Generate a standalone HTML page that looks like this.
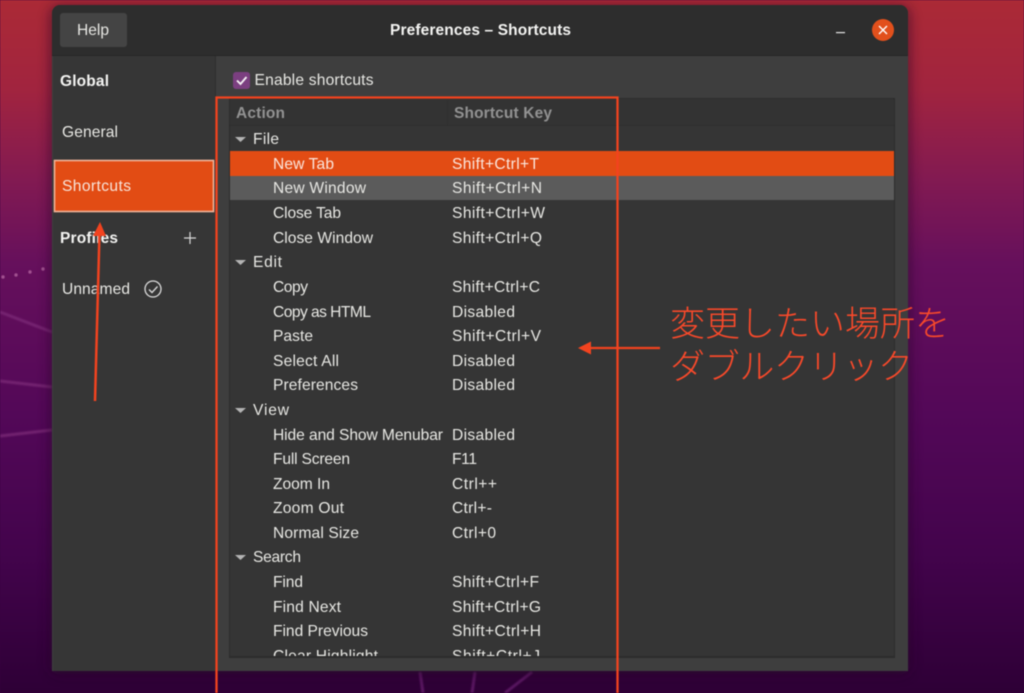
<!DOCTYPE html>
<html><head><meta charset="utf-8"><style>
html,body{margin:0;padding:0;width:1024px;height:693px;overflow:hidden;background:#3a0040}
svg{display:block;filter:blur(.4px)}
text{font-family:"Liberation Sans","Noto Sans CJK JP",sans-serif;font-size:15.6px;fill:#e8e8e4}
.b{font-weight:bold;fill:#f4f4f2;font-size:15.5px}
.h{font-weight:bold;fill:#929292;font-size:15.5px}
.j{font-family:"Liberation Sans","Noto Sans CJK JP",sans-serif;font-size:35px;font-weight:300;fill:#f8492a}
</style></head><body>
<svg width="1024" height="693" viewBox="0 0 1024 693" xmlns="http://www.w3.org/2000/svg">
<defs>
<linearGradient id="bg" x1="0" y1="0" x2="0" y2="1">
<stop offset="0" stop-color="#ab2a36"/><stop offset=".13" stop-color="#a1243f"/><stop offset=".26" stop-color="#821a52"/><stop offset=".38" stop-color="#66105c"/><stop offset=".6" stop-color="#530858"/><stop offset=".8" stop-color="#43044c"/><stop offset="1" stop-color="#2e0036"/>
</linearGradient>
<filter id="s" x="-5%" y="-5%" width="110%" height="110%"><feGaussianBlur stdDeviation="6"/></filter>
<filter id="l" x="-20%" y="-200%" width="140%" height="500%"><feGaussianBlur stdDeviation=".8"/></filter>
<clipPath id="tree"><rect x="230" y="99" width="664" height="557"/></clipPath>
</defs>
<rect width="1024" height="693" fill="url(#bg)"/>
<g stroke="#7d2a78" stroke-width="3" fill="none" opacity=".75" filter="url(#l)">
<path d="M0 312L52 332"/><path d="M0 381L52 387"/><path d="M0 436L52 430"/>
</g>
<g stroke="#5a1262" stroke-width="3" fill="none" filter="url(#l)"><path d="M420 672L423 693"/><path d="M475 672L472 693"/><path d="M532 672L505 693"/></g>
<g fill="#a0508f"><circle cx="3" cy="277" r="1.7"/><circle cx="16" cy="275" r="1.7"/><circle cx="30" cy="272" r="1.7"/><circle cx="43" cy="269" r="1.7"/></g>

<rect x="50" y="6" width="860" height="668" rx="8" fill="#200a20" opacity=".55" filter="url(#s)"/>
<path d="M52 671V13a8 8 0 0 1 8-8H900a8 8 0 0 1 8 8V671Z" fill="#3e3e3e"/>
<path d="M52 55V13a8 8 0 0 1 8-8H900a8 8 0 0 1 8 8V55Z" fill="#2d2d2d"/>
<rect x="52" y="55" width="856" height="1" fill="#262626"/>
<rect x="53" y="56" width="162" height="615" fill="#363636"/>
<rect x="215" y="56" width="1" height="615" fill="#2e2e2e"/>

<rect x="60" y="13" width="67" height="34" rx="3" fill="#444"/>
<text x="77" y="35" textLength="32" lengthAdjust="spacing">Help</text>
<text class="b" x="390" y="35" textLength="181" lengthAdjust="spacing">Preferences – Shortcuts</text>
<rect x="836" y="32" width="9" height="1.2" fill="#e6e6e6"/>
<circle cx="883" cy="30" r="11" fill="#e2501c"/>
<path d="M879 26L887 34M887 26L879 34" stroke="#fff" stroke-width="1.4"/>

<text class="b" x="60" y="86" textLength="49" lengthAdjust="spacing">Global</text>
<text x="62" y="137" textLength="56" lengthAdjust="spacing">General</text>
<rect x="54.5" y="160.5" width="159" height="51" fill="#e24c14" stroke="#f2b49a" stroke-width="1.6"/>
<text x="62" y="191" textLength="69" lengthAdjust="spacing" style="fill:#f8e4da">Shortcuts</text>
<text class="b" x="60" y="243" textLength="58" lengthAdjust="spacing">Profiles</text>
<path d="M190 232V244M184 238H196" stroke="#d8d8d8" stroke-width="1.2"/>
<text x="62" y="294" textLength="68" lengthAdjust="spacing">Unnamed</text>
<circle cx="153" cy="289" r="8" fill="none" stroke="#dcdcdc" stroke-width="1.3"/>
<path d="M149 289.5L152 292.5L157.5 286.5" fill="none" stroke="#dcdcdc" stroke-width="1.3"/>

<rect x="233" y="72" width="17" height="17" rx="3" fill="#7b3f80"/>
<path d="M237 80.5L240.5 84L246.5 77" fill="none" stroke="#f4f0f4" stroke-width="1.9"/>
<text x="254.500" y="85" textLength="119" lengthAdjust="spacing">Enable shortcuts</text>

<rect x="229" y="98" width="666" height="560" fill="#2c2c2c"/>
<rect x="230" y="99" width="664" height="557" fill="#353535"/>
<rect x="230" y="99" width="664" height="26" fill="#333"/>
<rect x="230" y="125" width="664" height="1" fill="#2f2f2f"/>
<rect x="447" y="100" width="1" height="25" fill="#2f2f2f"/>
<text class="h" x="236" y="118" textLength="49" lengthAdjust="spacing">Action</text>
<text class="h" x="454" y="118" textLength="98" lengthAdjust="spacing">Shortcut Key</text>

<rect x="230" y="151" width="664" height="25" fill="#e24c14"/>
<rect x="230" y="176" width="664" height="24" fill="#5b5b5b"/>

<g fill="#b4b4b4">
<path d="M235 137H246L240.500 142Z"/><path d="M235 260H246L240.500 265Z"/><path d="M235 408H246L240.500 413Z"/><path d="M235 555H246L240.500 560Z"/>
</g>
<g clip-path="url(#tree)">
<text x="253" y="144" textLength="26" lengthAdjust="spacing">File</text>
<text x="273" y="169" textLength="61" lengthAdjust="spacing" style="fill:#fbe6dc">New Tab</text><text x="452" y="169" textLength="87" lengthAdjust="spacing" style="fill:#fbe6dc">Shift+Ctrl+T</text>
<text x="273" y="193" textLength="93" lengthAdjust="spacing">New Window</text><text x="452" y="193" textLength="90" lengthAdjust="spacing">Shift+Ctrl+N</text>
<text x="273" y="218" textLength="68" lengthAdjust="spacing">Close Tab</text><text x="452" y="218" textLength="93" lengthAdjust="spacing">Shift+Ctrl+W</text>
<text x="273" y="243" textLength="100" lengthAdjust="spacing">Close Window</text><text x="452" y="243" textLength="90" lengthAdjust="spacing">Shift+Ctrl+Q</text>
<text x="253" y="267" textLength="29" lengthAdjust="spacing">Edit</text>
<text x="273" y="292" textLength="35" lengthAdjust="spacing">Copy</text><text x="452" y="292" textLength="88" lengthAdjust="spacing">Shift+Ctrl+C</text>
<text x="273" y="317" textLength="98" lengthAdjust="spacing">Copy as HTML</text><text x="452" y="317" textLength="63" lengthAdjust="spacing">Disabled</text>
<text x="273" y="341" textLength="40" lengthAdjust="spacing">Paste</text><text x="452" y="341" textLength="89" lengthAdjust="spacing">Shift+Ctrl+V</text>
<text x="273" y="366" textLength="66" lengthAdjust="spacing">Select All</text><text x="452" y="366" textLength="63" lengthAdjust="spacing">Disabled</text>
<text x="273" y="390" textLength="85" lengthAdjust="spacing">Preferences</text><text x="452" y="390" textLength="63" lengthAdjust="spacing">Disabled</text>
<text x="253" y="415" textLength="36" lengthAdjust="spacing">View</text>
<text x="273" y="440" textLength="170" lengthAdjust="spacing">Hide and Show Menubar</text><text x="452" y="440" textLength="63" lengthAdjust="spacing">Disabled</text>
<text x="273" y="464" textLength="77" lengthAdjust="spacing">Full Screen</text><text x="452" y="464" textLength="25" lengthAdjust="spacing">F11</text>
<text x="273" y="489" textLength="57" lengthAdjust="spacing">Zoom In</text><text x="452" y="489" textLength="45" lengthAdjust="spacing">Ctrl++</text>
<text x="273" y="513" textLength="71" lengthAdjust="spacing">Zoom Out</text><text x="452" y="513" textLength="40" lengthAdjust="spacing">Ctrl+-</text>
<text x="273" y="538" textLength="86" lengthAdjust="spacing">Normal Size</text><text x="452" y="538" textLength="44" lengthAdjust="spacing">Ctrl+0</text>
<text x="253" y="562" textLength="48" lengthAdjust="spacing">Search</text>
<text x="273" y="587" textLength="30" lengthAdjust="spacing">Find</text><text x="452" y="587" textLength="87" lengthAdjust="spacing">Shift+Ctrl+F</text>
<text x="273" y="612" textLength="68" lengthAdjust="spacing">Find Next</text><text x="452" y="612" textLength="89" lengthAdjust="spacing">Shift+Ctrl+G</text>
<text x="273" y="636" textLength="95" lengthAdjust="spacing">Find Previous</text><text x="452" y="636" textLength="89" lengthAdjust="spacing">Shift+Ctrl+H</text>
<text x="273" y="661" textLength="105" lengthAdjust="spacing">Clear Highlight</text><text x="452" y="661" textLength="88" lengthAdjust="spacing">Shift+Ctrl+J</text>
</g>

<path d="M216.500 693V97.500H617.500V693" fill="none" stroke="#f2431f" stroke-width="2.300"/>
<path d="M95 401L99.500 232" stroke="#f2431f" stroke-width="2.500" fill="none"/>
<path d="M100 222L106 236H93Z" fill="#f2431f"/>
<path d="M660 348H590" stroke="#f2431f" stroke-width="2.300"/>
<path d="M578 348L591 341.500V354.500Z" fill="#f2431f"/>
<text class="j" x="670" y="336" textLength="280" lengthAdjust="spacing">変更したい場所を</text>
<text class="j" x="670" y="379" textLength="243" lengthAdjust="spacing">ダブルクリック</text>
</svg>
</body></html>
